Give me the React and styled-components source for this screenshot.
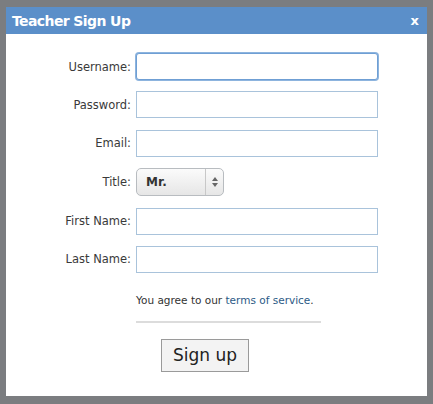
import React from 'react';
import styled, { createGlobalStyle } from 'styled-components';

const GlobalStyle = createGlobalStyle`
  html, body {
    margin: 0;
    padding: 0;
    background: #7b7d80;
  }
  body {
    font-family: "DejaVu Sans", "Liberation Sans", sans-serif;
  }
`;

const Backdrop = styled.div`
  width: 433px;
  height: 404px;
  padding: 7px 6px 8px;
  box-sizing: border-box;
`;

const Dialog = styled.div`
  width: 421px;
  height: 389px;
  background: #fff;
  display: flex;
  flex-direction: column;
`;

const Header = styled.div`
  height: 27px;
  background: #5b8fc9;
  display: flex;
  align-items: center;
  justify-content: space-between;
  padding: 0 8px 0 6px;
  color: #fff;
  font-weight: bold;
`;

const Title = styled.h1`
  margin: 0;
  font-size: 14px;
  font-family: "DejaVu Sans", sans-serif;
  font-weight: bold;
  letter-spacing: -0.6px;
`;

const Close = styled.span`
  font-size: 13px;
  cursor: pointer;
`;

const Form = styled.form`
  display: grid;
  grid-template-columns: 125px 242px;
  column-gap: 5px;
  row-gap: 11.4px;
  padding-top: 19px;
  align-items: center;
`;

const Label = styled.label`
  text-align: right;
  font-size: 11.5px;
  color: #3a3a3a;
`;

const Input = styled.input`
  box-sizing: border-box;
  width: 242px;
  height: 27px;
  margin: 0;
  border: 1px solid ${(p) => (p.$focused ? '#6f9fd4' : '#a9c3db')};
  border-radius: ${(p) => (p.$focused ? '3px' : '0')};
  box-shadow: ${(p) => (p.$focused ? '0 0 0 1px #8db4de' : 'none')};
  outline: none;
  background: #fff;
`;

const SelectBox = styled.div`
  box-sizing: border-box;
  width: 88px;
  height: 28px;
  border: 1px solid #b8bcc0;
  border-radius: 5px;
  background: linear-gradient(#fbfbfb, #e6e6e6);
  display: flex;
  align-items: center;
  font-size: 12px;
  font-weight: bold;
  color: #333;
`;

const SelectValue = styled.span`
  flex: 1;
  padding-left: 9px;
`;

const SelectArrows = styled.span`
  width: 17px;
  height: 100%;
  border-left: 1px solid #c8c8c8;
  display: flex;
  align-items: center;
  justify-content: center;
`;

const Footer = styled.div`
  padding-left: 130px;
  display: flex;
  flex-direction: column;
`;

const Terms = styled.p`
  margin: 21px 0 0;
  font-size: 10.5px;
  color: #333;
  width: 185px;
  padding-bottom: 15px;
  border-bottom: 2px solid #dcdcdc;
`;

const TermsLink = styled.a`
  color: #2c5a86;
  text-decoration: none;
`;

const SubmitButton = styled.button`
  margin: 16px 0 0 25px;
  width: 88px;
  height: 33px;
  box-sizing: border-box;
  border: 1px solid #9a9a9a;
  background: #f3f3f3;
  font-family: "DejaVu Sans", sans-serif;
  font-size: 17px;
  color: #222;
  padding: 0;
`;

const fields = [
  { id: 'username', label: 'Username:', focused: true },
  { id: 'password', label: 'Password:', type: 'password' },
  { id: 'email', label: 'Email:' },
  { id: 'title', label: 'Title:', select: true },
  { id: 'first', label: 'First Name:' },
  { id: 'last', label: 'Last Name:' },
];

export default function App() {
  return (
    <>
      <GlobalStyle />
      <Backdrop>
        <Dialog>
          <Header>
            <Title>Teacher Sign Up</Title>
            <Close>x</Close>
          </Header>
          <Form onSubmit={(e) => e.preventDefault()}>
            {fields.map((f) => (
              <React.Fragment key={f.id}>
                <Label htmlFor={f.id}>{f.label}</Label>
                {f.select ? (
                  <SelectBox id={f.id}>
                    <SelectValue>Mr.</SelectValue>
                    <SelectArrows>
                      <svg width="6" height="10" viewBox="0 0 6 10">
                        <path d="M0 4 L3 0 L6 4 Z M0 6 L3 10 L6 6 Z" fill="#666" />
                      </svg>
                    </SelectArrows>
                  </SelectBox>
                ) : (
                  <Input id={f.id} type={f.type || 'text'} $focused={f.focused} />
                )}
              </React.Fragment>
            ))}
          </Form>
          <Footer>
            <Terms>
              You agree to our <TermsLink href="#">terms of service</TermsLink>.
            </Terms>
            <SubmitButton type="button">Sign up</SubmitButton>
          </Footer>
        </Dialog>
      </Backdrop>
    </>
  );
}
